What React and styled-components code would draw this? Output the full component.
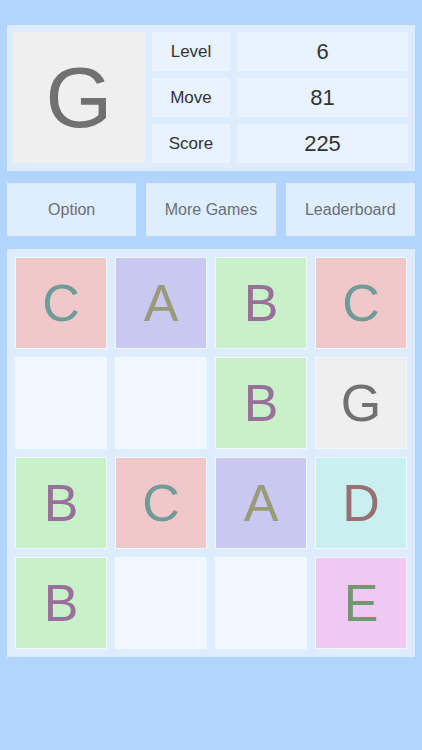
import React from 'react';
import styled, { createGlobalStyle } from 'styled-components';

const GlobalStyle = createGlobalStyle`
    html, body {
        margin: 0;
        padding: 0;
        background: #b1d5fd;
        font-family: "Liberation Sans", Arial, sans-serif;
    }
`;

const TILE_COLORS = {
    A: { bg: '#c9c8f1', fg: '#999a78' },
    B: { bg: '#c8f0c9', fg: '#9a6f9a' },
    C: { bg: '#f1c8c9', fg: '#6f9b99' },
    D: { bg: '#c8f0f1', fg: '#9a6f6f' },
    E: { bg: '#f1c8f1', fg: '#6f9a70' },
    G: { bg: '#efefef', fg: '#717171' }
};

const board = [
    ['C', 'A', 'B', 'C'],
    ['', '', 'B', 'G'],
    ['B', 'C', 'A', 'D'],
    ['B', '', '', 'E']
];

const stats = [
    { label: 'Level', value: '6' },
    { label: 'Move', value: '81' },
    { label: 'Score', value: '225' }
];

const Page = styled.div`
    min-height: 750px;
    padding: 25px 7px 0;
    box-sizing: border-box;
`;

const Panel = styled.div`
    background: #ddedfe;
`;

const Header = styled(Panel)`
    display: grid;
    grid-template-columns: 132px 78px 171px;
    grid-template-rows: repeat(3, 39px);
    gap: 7px;
    padding: 7px 7px 8px 6px;
`;

const NextTile = styled.div`
    grid-row: 1 / 4;
    background: #efefef;
    color: #717171;
    font-size: 86px;
    display: flex;
    align-items: center;
    justify-content: center;
`;

const Cell = styled.div`
    background: #e8f3ff;
    display: flex;
    align-items: center;
    justify-content: center;
    color: #333;
    font-size: ${p => (p.$value ? '22px' : '17px')};
`;

const Buttons = styled.div`
    display: grid;
    grid-template-columns: repeat(3, 1fr);
    gap: 10px;
    margin-top: 12px;
`;

const Button = styled.button`
    height: 53px;
    border: none;
    background: #dfeeff;
    color: #6b6f76;
    font-family: inherit;
    font-size: 16px;
    padding: 0;
`;

const Board = styled(Panel)`
    margin-top: 13px;
    padding: 4px;
    display: grid;
    grid-template-columns: repeat(4, 100px);
    grid-auto-rows: 100px;
`;

const Tile = styled.div`
    margin: 4px;
    box-sizing: border-box;
    display: flex;
    align-items: center;
    justify-content: center;
    font-size: 52px;
    background: ${p => (p.$letter ? TILE_COLORS[p.$letter].bg : '#f0f7ff')};
    color: ${p => (p.$letter ? TILE_COLORS[p.$letter].fg : 'transparent')};
    border: ${p => (p.$letter ? '1px solid #f2f7fc' : 'none')};
`;

const App = () => (
    <Page>
        <GlobalStyle />
        <Header>
            <NextTile>G</NextTile>
            {stats.map(s => (
                <React.Fragment key={s.label}>
                    <Cell>{s.label}</Cell>
                    <Cell $value>{s.value}</Cell>
                </React.Fragment>
            ))}
        </Header>
        <Buttons>
            <Button>Option</Button>
            <Button>More Games</Button>
            <Button>Leaderboard</Button>
        </Buttons>
        <Board>
            {board.flat().map((letter, i) => (
                <Tile key={i} $letter={letter}>{letter}</Tile>
            ))}
        </Board>
    </Page>
);

export default App;
